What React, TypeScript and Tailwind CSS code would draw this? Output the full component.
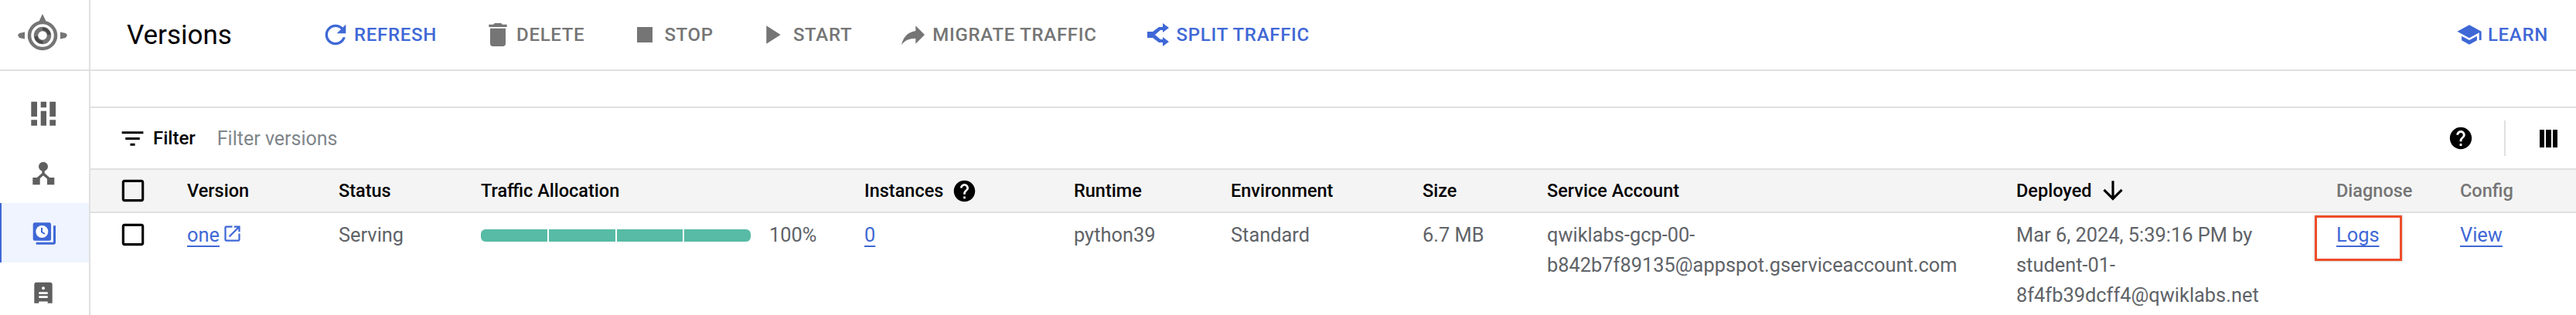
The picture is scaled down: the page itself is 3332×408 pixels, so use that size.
import React from 'react';

const paths = {
  refresh: 'M17.65 6.35C16.2 4.9 14.21 4 12 4c-4.42 0-7.99 3.58-7.99 8s3.57 8 7.99 8c3.73 0 6.84-2.55 7.73-6h-2.08c-.82 2.33-3.04 4-5.65 4-3.31 0-6-2.69-6-6s2.69-6 6-6c1.66 0 3.14.69 4.22 1.78L13 11h7V4l-2.35 2.35z',
  trash: 'M6 19c0 1.1.9 2 2 2h8c1.1 0 2-.9 2-2V7H6v12zM19 4h-3.5l-1-1h-5l-1 1H5v2h14V4z',
  stop: 'M6 6h12v12H6z',
  play: 'M8 5v14l11-7z',
  forward: 'M14 9V5l7 7-7 7v-4.1c-5 0-8.5 1.6-11 5.1 1-5 4-10 11-11z',
  school: 'M5 13.18v4L12 21l7-3.82v-4L12 17l-7-3.82zM12 3L1 9l11 6 9-4.91V17h2V9L12 3z',
  help: 'M12 2C6.48 2 2 6.48 2 12s4.48 10 10 10 10-4.48 10-10S17.52 2 12 2zm1 17h-2v-2h2v2zm2.07-7.75l-.9.92C13.45 12.9 13 13.5 13 15h-2v-.5c0-1.1.45-2.1 1.17-2.83l1.24-1.26c.37-.36.59-.86.59-1.41 0-1.1-.9-2-2-2s-2 .9-2 2H8c0-2.21 1.79-4 4-4s4 1.79 4 4c0 .88-.36 1.68-.93 2.25z',
  filter: 'M10 18h4v-2h-4v2zM3 6v2h18V6H3zm3 7h12v-2H6v2z',
  arrowDown: 'M20 12l-1.41-1.41L13 16.17V4h-2v12.17l-5.58-5.59L4 12l8 8 8-8z',
  external: 'M19 19H5V5h7V3H5c-1.11 0-2 .9-2 2v14c0 1.1.89 2 2 2h14c1.1 0 2-.9 2-2v-7h-2v7zM14 3v2h3.59l-9.83 9.83 1.41 1.41L19 6.41V10h2V3h-7z',
  checkbox: 'M19 5v14H5V5h14m0-2H5c-1.1 0-2 .9-2 2v14c0 1.1.9 2 2 2h14c1.1 0 2-.9 2-2V5c0-1.1-.9-2-2-2z',
};

function Icon({ d, className }: { d: string; className: string }) {
  return (
    <svg viewBox="0 0 24 24" fill="currentColor" className={className}>
      <path d={d} />
    </svg>
  );
}

function SplitIcon({ className }: { className: string }) {
  return (
    <svg viewBox="0 0 28 30" fill="currentColor" className={className}>
      <path d="M20 0L28 6L20 12V9H17L10 15L17 21H20V18L28 24L20 30V25H15L7 19H0V11H7L15 5H20Z" />
    </svg>
  );
}

function AppEngineLogo() {
  return (
    <svg viewBox="0 0 64 60" className="h-[60px] w-[64px]">
      <path d="M27.5 9.5L32 0L36.5 9.5Z" fill="#757575" />
      <path d="M0 27.5L2 25L9 23.5V32.5L2 31Z" fill="#757575" />
      <path d="M64 27.5L62 25L55 23.5V32.5L62 31Z" fill="#757575" />
      <circle cx="32" cy="28" r="17" fill="none" stroke="#757575" strokeWidth="4.5" />
      <circle cx="32" cy="28" r="8.5" fill="none" stroke="#757575" strokeWidth="5.5" />
      <path d="M23.5 29C24 34 28 37 32.5 36.5M40.5 27C40 22 36 19.5 32 19.5" fill="none" stroke="#4a4a4a" strokeWidth="4" />
    </svg>
  );
}

function DashboardIcon() {
  return (
    <svg viewBox="0 0 40 40" fill="#5f5f5f" className="h-10 w-10">
      <path d="M4.3 4.7H12V24H4.3ZM4.3 28.3H12V35.7H4.3ZM16.7 4.7H24V12.3H16.7ZM16.7 16.7H24V35.7H16.7ZM28.3 4.7H36V24H28.3ZM28.3 28.3H36V35.7H28.3Z" />
    </svg>
  );
}

function NodesIcon() {
  return (
    <svg viewBox="0 0 40 40" className="h-10 w-10">
      <circle cx="20" cy="10.7" r="6" fill="#5f5f5f" />
      <path d="M6.3 25H15.7V34.3H6.3ZM25 25H34.3V34.3H25Z" fill="#5f5f5f" />
      <path d="M20 14V20L11 28M20 20L29 28" fill="none" stroke="#5f5f5f" strokeWidth="3.4" />
    </svg>
  );
}

function VersionsIcon() {
  return (
    <svg viewBox="0 0 40 40" className="h-10 w-10">
      <rect x="6.7" y="6.3" width="23.3" height="23.4" rx="2.5" fill="#3f68d6" />
      <path d="M33 10.3H36V32C36 33.5 35 34.7 33.5 34.7H10.7V31.7H33Z" fill="#3f68d6" />
      <circle cx="18.3" cy="18" r="8" fill="#fff" />
      <path d="M18 13V18.5L22 21" fill="none" stroke="#3f68d6" strokeWidth="2" />
    </svg>
  );
}

function CertIcon() {
  return (
    <svg viewBox="0 0 40 40" className="h-10 w-10">
      <path d="M11 6.7H29C30.5 6.7 31.7 7.9 31.7 9.4V33.7H25.7V31.5H14.3V33.7H8.3V9.4C8.3 7.9 9.5 6.7 11 6.7Z" fill="#5f5f5f" />
      <circle cx="20" cy="14.3" r="2" fill="#fff" />
      <path d="M14.3 19.3H25.7V22H14.3ZM14.3 24.3H25.7V27H14.3Z" fill="#fff" />
    </svg>
  );
}

const tools = [
  { label: 'REFRESH', d: paths.refresh, color: 'text-[#3f68d6]', gap: 'mr-[59px]', textGap: 'ml-1' },
  { label: 'DELETE', d: paths.trash, color: 'text-[#757575]', gap: 'mr-[58px]', textGap: 'ml-1' },
  { label: 'STOP', d: paths.stop, color: 'text-[#757575]', gap: 'mr-[55px]', textGap: 'ml-[5px]' },
  { label: 'START', d: paths.play, color: 'text-[#757575]', gap: 'mr-[59px]', textGap: 'ml-2' },
  { label: 'MIGRATE TRAFFIC', d: paths.forward, color: 'text-[#757575]', gap: 'mr-[65px]', textGap: 'ml-[5px]' },
];

const columns = 'grid grid-cols-[89px_196px_184px_496px_271px_203px_248px_161px_607px_414px_160px_1fr]';

function Th({ children }: { children: React.ReactNode }) {
  return <div className="flex items-center text-[23.5px] font-medium text-black">{children}</div>;
}

function TextLink({ children }: { children: React.ReactNode }) {
  return <a className="text-[#3f68d6] underline decoration-2 underline-offset-[5px]">{children}</a>;
}

export default function App() {
  return (
    <div className="relative flex h-[408px] w-[3332px] overflow-hidden bg-white text-[25.4px] leading-[39px] text-[#5f6368] [font-family:Roboto,sans-serif]">
      <aside className="w-[117px] shrink-0 border-r-2 border-[#e0e0e0]">
        <div className="flex h-[92px] items-center justify-center border-b-2 border-[#e0e0e0] pt-[6px] pr-[5px]">
          <AppEngineLogo />
        </div>
        <nav className="pt-4">
          <div className="flex h-[78px] items-center justify-center pr-1"><DashboardIcon /></div>
          <div className="flex h-[77px] items-center justify-center pr-1"><NodesIcon /></div>
          <div className="flex h-[77px] items-center justify-center border-l-2 border-[#3f68d6] bg-[#eff4fe] pr-1.5"><VersionsIcon /></div>
          <div className="flex h-[77px] items-center justify-center pr-1"><CertIcon /></div>
        </nav>
      </aside>

      <main className="min-w-0 flex-1">
        <header className="flex h-[92px] items-center border-b-2 border-[#e0e0e0] pl-[47px] pr-[36px] text-[24px]">
          <h1 className="w-[250px] text-[35px] text-black">Versions</h1>
          {tools.map((t) => (
            <button key={t.label} className={`flex items-center font-medium tracking-[0.7px] ${t.color} ${t.gap}`}>
              <Icon d={t.d} className="h-10 w-10" />
              <span className={t.textGap}>{t.label}</span>
            </button>
          ))}
          <button className="flex items-center font-medium tracking-[0.7px] text-[#3f68d6]">
            <SplitIcon className="h-[30px] w-[28px]" />
            <span className="ml-[10px]">SPLIT TRAFFIC</span>
          </button>
          <button className="ml-auto flex items-center font-medium tracking-[0.7px] text-[#3f68d6]">
            <Icon d={paths.school} className="h-[34px] w-[34px]" />
            <span className="ml-[7px]">LEARN</span>
          </button>
        </header>

        <div className="h-[48px] border-b-2 border-[#e0e0e0]" />

        <div className="flex h-[78px] items-center pl-[36px] pr-[24px]">
          <Icon d={paths.filter} className="h-[37px] w-[37px] text-black" />
          <span className="ml-2 text-[24px] font-medium text-black">Filter</span>
          <span className="ml-[28px] text-[25px] text-[#80868b]">Filter versions</span>
          <Icon d={paths.help} className="ml-auto h-[34px] w-[34px] text-black" />
          <div className="ml-[39px] h-[46px] w-[2px] bg-[#e0e0e0]" />
          <div className="ml-[44px] flex h-[23px] w-[23px] gap-[2px]">
            <div className="flex-1 bg-black" />
            <div className="flex-1 bg-black" />
            <div className="flex-1 bg-black" />
          </div>
        </div>

        <div className={`${columns} h-[58px] items-center border-y-2 border-[#e0e0e0] bg-[#f4f4f4] pl-[36px]`}>
          <Icon d={paths.checkbox} className="h-[38px] w-[38px] text-black" />
          <Th>Version</Th>
          <Th>Status</Th>
          <Th>Traffic Allocation</Th>
          <Th>
            Instances
            <Icon d={paths.help} className="ml-[11px] h-[33px] w-[33px]" />
          </Th>
          <Th>Runtime</Th>
          <Th>Environment</Th>
          <Th>Size</Th>
          <Th>Service Account</Th>
          <Th>
            Deployed
            <Icon d={paths.arrowDown} className="ml-[9px] h-[38px] w-[38px]" />
          </Th>
          <div className="text-[23.5px] font-medium text-[#757575]">Diagnose</div>
          <div className="text-[23.5px] font-medium text-[#757575]">Config</div>
        </div>

        <div className={`${columns} pl-[36px] pt-[9px]`}>
          <Icon d={paths.checkbox} className="h-[38px] w-[38px] text-black" />
          <div className="flex items-start">
            <TextLink>one</TextLink>
            <Icon d={paths.external} className="ml-[3px] mt-[4px] h-[27px] w-[27px] text-[#3f68d6]" />
          </div>
          <div>Serving</div>
          <div className="flex h-[39px] items-center">
            <div className="flex h-4 w-[349px] gap-[2px] overflow-hidden rounded-md">
              <div className="flex-1 bg-[#57bba5]" />
              <div className="flex-1 bg-[#57bba5]" />
              <div className="flex-1 bg-[#57bba5]" />
              <div className="flex-1 bg-[#57bba5]" />
            </div>
            <span className="ml-[24px]">100%</span>
          </div>
          <div><TextLink>0</TextLink></div>
          <div>python39</div>
          <div>Standard</div>
          <div>6.7 MB</div>
          <div>qwiklabs-gcp-00-b842b7f89135@appspot.gserviceaccount.com</div>
          <div className="pr-[60px]">Mar 6, 2024, 5:39:16 PM by student-01-8f4fb39dcff4@qwiklabs.net</div>
          <div><TextLink>Logs</TextLink></div>
          <div><TextLink>View</TextLink></div>
        </div>
      </main>

      <div className="absolute left-[2994px] top-[279px] h-[59px] w-[113px] border-[3px] border-[#ee4d2a] shadow-[0_0_3px_rgba(0,0,0,0.25)]" />
    </div>
  );
}
